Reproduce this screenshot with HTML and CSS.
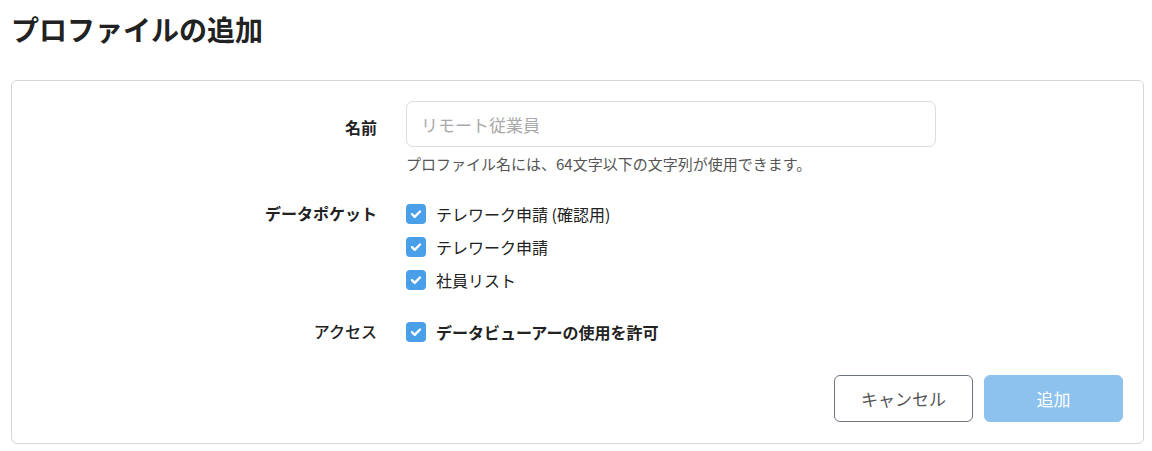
FILE: index.html
```html
<!DOCTYPE html>
<html lang="ja">
<head>
<meta charset="utf-8">
<link rel="stylesheet" href="styles.css">
</head>
<body>
<h1 class="title">プロファイルの追加</h1>
<form class="card">
  <div class="row row-name">
    <label class="label">名前</label>
    <div class="control">
      <input class="input" type="text" placeholder="リモート従業員">
      <p class="help">プロファイル名には、64文字以下の文字列が使用できます。</p>
    </div>
  </div>
  <div class="row row-pocket">
    <div class="label">データポケット</div>
    <div class="control checks">
      <div class="check"><span class="box"><svg viewBox="0 0 20 20" width="20" height="20"><path d="M6 10.2l2.7 2.6L14 7.5" fill="none" stroke="#fff" stroke-width="2.4" stroke-linecap="round" stroke-linejoin="round"/></svg></span>テレワーク申請&nbsp;(確認用)</div>
      <div class="check"><span class="box"><svg viewBox="0 0 20 20" width="20" height="20"><path d="M6 10.2l2.7 2.6L14 7.5" fill="none" stroke="#fff" stroke-width="2.4" stroke-linecap="round" stroke-linejoin="round"/></svg></span>テレワーク申請</div>
      <div class="check"><span class="box"><svg viewBox="0 0 20 20" width="20" height="20"><path d="M6 10.2l2.7 2.6L14 7.5" fill="none" stroke="#fff" stroke-width="2.4" stroke-linecap="round" stroke-linejoin="round"/></svg></span>社員リスト</div>
    </div>
  </div>
  <div class="row row-access">
    <div class="label">アクセス</div>
    <div class="control">
      <div class="check strong"><span class="box"><svg viewBox="0 0 20 20" width="20" height="20"><path d="M6 10.2l2.7 2.6L14 7.5" fill="none" stroke="#fff" stroke-width="2.4" stroke-linecap="round" stroke-linejoin="round"/></svg></span>データビューアーの使用を許可</div>
    </div>
  </div>
  <div class="actions">
    <button type="button" class="btn btn-cancel">キャンセル</button>
    <button type="button" class="btn btn-add">追加</button>
  </div>
</form>
</body>
</html>
```

FILE: styles.css
```css
html, body {
  margin: 0;
  padding: 0;
  background: #fff;
}
body {
  font-family: "Noto Sans CJK JP", "Noto Sans", sans-serif;
  color: #222;
}
.title {
  margin: 0;
  padding: 7px 0 0 11px;
  font-size: 28px;
  line-height: 44px;
  font-weight: 700;
  color: #222;
  letter-spacing: 0;
}
.card {
  margin: 29px 8px 0 11px;
  border: 1px solid #d6d6d6;
  border-radius: 6px;
  padding: 20px 20px 19px 0;
  box-sizing: border-box;
  height: 364px;
}
.row {
  display: grid;
  grid-template-columns: 365px 530px;
  column-gap: 29px;
}
.label {
  text-align: right;
  font-size: 16px;
  font-weight: 700;
  color: #222;
}
.row-name .label {
  line-height: 46px;
  padding-top: 3px;
}
.input {
  display: block;
  box-sizing: border-box;
  width: 530px;
  height: 46px;
  border: 1px solid #dcdcdc;
  border-radius: 7px;
  padding: 0 14px;
  font-family: inherit;
  font-size: 17px;
  color: #222;
  outline: none;
}
.input::placeholder {
  color: #a9a9a9;
}
.help {
  margin: 6px 0 0;
  font-size: 15px;
  line-height: 22px;
  color: #555;
  white-space: nowrap;
}
.row-pocket {
  margin-top: 22px;
}
.row-pocket .label {
  line-height: 33px;
}
.checks {
  display: flex;
  flex-direction: column;
}
.check {
  display: flex;
  align-items: center;
  height: 33px;
  font-size: 16px;
  color: #222;
}
.check.strong {
  font-weight: 700;
}
.box {
  width: 20px;
  height: 20px;
  border-radius: 4px;
  background: #4a9fe9;
  margin-right: 10px;
  display: inline-flex;
  flex: none;
}
.box svg {
  display: block;
}
.row-access {
  margin-top: 19px;
}
.row-access .label {
  line-height: 33px;
  font-weight: 500;
}
.actions {
  display: flex;
  justify-content: flex-end;
  gap: 11px;
  margin-top: 27px;
}
.btn {
  width: 139px;
  height: 47px;
  border-radius: 6px;
  font-family: inherit;
  font-size: 17px;
  cursor: pointer;
}
.btn-cancel {
  background: #fff;
  border: 1px solid #6d747d;
  color: #555;
}
.btn-add {
  background: #8dc2ef;
  border: 1px solid #8dc2ef;
  color: #fff;
}
```
